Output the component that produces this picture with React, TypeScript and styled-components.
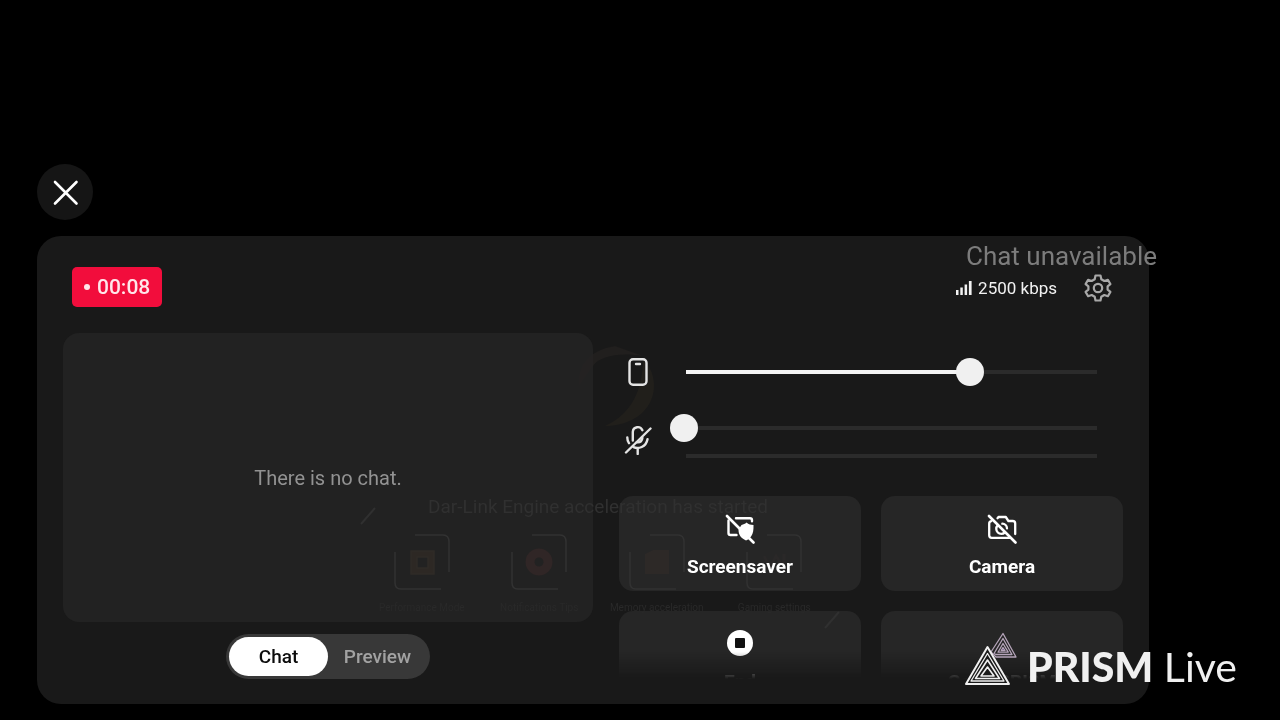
import React, { useState } from "react";
import styled, { createGlobalStyle } from "styled-components";

const GlobalStyle = createGlobalStyle`
  *, *::before, *::after { box-sizing: border-box; }
  body {
    margin: 0;
    background: #000;
    color: #f2f2f2;
    font-family: Roboto, "Liberation Sans", sans-serif;
  }
  button, input { font-family: inherit; }
`;

const Page = styled.main`
  padding: 164px 131px 16px 37px;
  overflow: hidden;
`;

const CloseButton = styled.button`
  display: flex;
  align-items: center;
  justify-content: center;
  width: 56px;
  height: 56px;
  margin-bottom: 16px;
  padding: 0;
  border: 0;
  border-radius: 50%;
  background: #151515;
  color: #fff;
`;

const Panel = styled.section`
  position: relative;
  padding: 31px 26px 25px;
  border-radius: 24px;
  background: #191919;
`;

const Header = styled.header`
  display: flex;
  align-items: center;
  justify-content: space-between;
  margin-bottom: 26px;
  padding: 0 11px 0 9px;
`;

const LiveBadge = styled.div`
  display: flex;
  align-items: center;
  gap: 7px;
  height: 40px;
  padding: 0 12px;
  border-radius: 5px;
  background: #f20d3c;
  color: #ffe6ea;
  font-size: 21px;
  line-height: 24px;
  font-weight: 500;
`;

const Dot = styled.span`
  width: 6px;
  height: 6px;
  border-radius: 50%;
  background: currentColor;
`;

const Status = styled.div`
  display: flex;
  align-items: center;
  gap: 27px;
  padding-top: 2px;
`;

const Bitrate = styled.span`
  display: flex;
  align-items: center;
  gap: 6px;
  font-size: 17px;
  line-height: 24px;
`;

const IconButton = styled.button`
  display: flex;
  padding: 0;
  border: 0;
  background: none;
  color: #a8a8a8;
`;

const Columns = styled.div`
  display: grid;
  grid-template-columns: minmax(0, 530fr) minmax(0, 504fr);
  gap: 26px;
`;

const ChatColumn = styled.div`
  display: flex;
  flex-direction: column;
  align-items: center;
  gap: 12px;
`;

const ChatBox = styled.div`
  display: flex;
  align-items: center;
  justify-content: center;
  width: 100%;
  height: 289px;
  border-radius: 16px;
  background: #222;
  color: #929292;
  font-size: 20px;
  line-height: 24px;
`;

const Toggle = styled.div`
  display: flex;
  width: 204px;
  height: 45px;
  padding: 3px;
  border-radius: 23px;
  background: #383838;
`;

const ToggleOption = styled.button<{ $active: boolean }>`
  flex: 1;
  padding: 0;
  border: 0;
  border-radius: 20px;
  background: ${(p) => (p.$active ? "#fff" : "transparent")};
  color: ${(p) => (p.$active ? "#0c0c0c" : "#a2a2a2")};
  font-size: 19px;
  line-height: 24px;
  font-weight: 500;
`;

const Controls = styled.div`
  padding-top: 25px;
`;

const SliderRow = styled.div`
  display: grid;
  grid-template-columns: 37px minmax(0, 1fr);
  align-items: center;
  gap: 14px;
  padding-right: 10px;
`;

const SliderIcon = styled.label`
  display: flex;
  justify-content: center;
  color: #e4e4e4;
`;

const Mixers = styled.div`
  display: grid;
  gap: 28px;
  margin-bottom: 30px;
`;

const MicTracks = styled.div`
  display: grid;
  gap: 12px;
  padding-bottom: 8px;
`;

const Range = styled.input<{ $value: number }>`
  display: block;
  width: 100%;
  height: 28px;
  margin: 0;
  appearance: none;
  background:
    linear-gradient(#f4f4f4, #f4f4f4) 16px center / calc((100% - 32px) * ${(p) => p.$value / 100}) 4px no-repeat,
    linear-gradient(#2b2b2b, #2b2b2b) 16px center / calc(100% - 32px) 4px no-repeat;

  &::-webkit-slider-thumb {
    width: 28px;
    height: 28px;
    appearance: none;
    border: 0;
    border-radius: 50%;
    background: #f0f0f0;
  }
`;

const LevelBar = styled.div`
  height: 4px;
  margin: 0 16px;
  background: #2b2b2b;
`;

const ActionGrid = styled.div`
  display: grid;
  grid-template-columns: repeat(2, minmax(0, 1fr));
  grid-auto-rows: 95px;
  gap: 20px;
  height: 183px;
  overflow: hidden;
  mask-image: linear-gradient(#000 156px, transparent 183px);
`;

const Action = styled.button`
  display: flex;
  flex-direction: column;
  align-items: center;
  gap: 11px;
  padding: 18px 0 0;
  border: 0;
  border-radius: 14px;
  background: #262626;
  color: #fff;
  font-size: 19px;
  line-height: 24px;
  font-weight: 700;
`;

const Notice = styled.p`
  position: absolute;
  top: 4px;
  right: -8px;
  margin: 0;
  color: #7c7c7c;
  font-size: 26px;
  line-height: 32px;
`;

const Watermark = styled.div`
  position: absolute;
  right: -88px;
  bottom: 18px;
  display: flex;
  align-items: flex-end;
  gap: 10px;
  color: #f0f0f0;
`;

const BrandName = styled.span`
  font-family: Lato, "Open Sans", sans-serif;
  font-size: 41px;
  line-height: 38px;
  font-weight: 400;
  white-space: nowrap;

  strong { font-weight: 900; }
`;

const FadingToast = styled.div`
  position: absolute;
  top: 258px;
  left: 326px;
  width: 470px;
  color: #303030;
  mix-blend-mode: lighten;
  pointer-events: none;
`;

const ToastTitle = styled.p`
  margin: 0 0 14px;
  text-align: center;
  font-size: 19px;
  line-height: 26px;
`;

const ToastTiles = styled.div`
  display: grid;
  grid-template-columns: repeat(4, minmax(0, 1fr));
  justify-items: center;
  font-size: 10px;
  line-height: 12px;
  color: #292929;
`;

const ToastTile = styled.div`
  display: flex;
  flex-direction: column;
  align-items: center;
  gap: 12px;
  white-space: nowrap;
`;

const ToastArt = styled.svg`
  position: absolute;
  top: 100px;
  left: 316px;
  mix-blend-mode: lighten;
  pointer-events: none;
`;

const stroke = {
  fill: "none",
  stroke: "currentColor",
  strokeLinecap: "round" as const,
  strokeLinejoin: "round" as const,
};

const CloseIcon = () => (
  <svg width="28" height="28" viewBox="0 0 28 28" {...stroke} strokeWidth="2.6">
    <path d="M4 4 25.500 25.500M25.500 4 4 25.500" />
  </svg>
);

const SignalIcon = () => (
  <svg width="16" height="14" viewBox="0 0 16 14" fill="currentColor">
    <rect x="0" y="9" width="2.5" height="5" />
    <rect x="4.3" y="6.5" width="2.5" height="7.5" />
    <rect x="8.6" y="3.5" width="2.5" height="10.5" />
    <rect x="12.9" y="0" width="2.7" height="14" />
  </svg>
);

const GearIcon = () => (
  <svg width="28" height="28" viewBox="0 0 28 28" {...stroke} strokeWidth="2.2">
    <path d="M11.5 1.5h5l.8 3.7 3 1.8 3.6-1.2 2.5 4.3-2.8 2.3v3.2l2.8 2.3-2.5 4.3-3.6-1.2-3 1.8-.8 3.7h-5l-.8-3.7-3-1.8-3.6 1.2-2.5-4.3 2.8-2.3v-3.2l-2.8-2.3 2.5-4.3L7.700 7l3-1.8z" />
    <circle cx="14" cy="14" r="4.200" />
  </svg>
);

const PhoneIcon = () => (
  <svg width="20" height="28" viewBox="0 0 20 28" {...stroke} strokeWidth="2.4">
    <rect x="1.500" y="1.300" width="17" height="25.400" rx="3.500" />
    <path d="M8 6h4" />
  </svg>
);

const MicOffIcon = () => (
  <svg width="28" height="30" viewBox="0 0 28 30" {...stroke} strokeWidth="2.4">
    <path d="M8.800 15.500V6.800a5 5 0 0 1 9.600-1.600" />
    <path d="M3.300 12.500c0 2.700.6 4.400 1.700 5.700M9.500 22.200c4.800 2 12.500.2 14-8M13.700 23.500V29" />
    <path d="M12.800 17.300c3 .3 5.200-1.400 5.600-4.500" />
    <path d="M2 27.500 26.500 3.500" />
  </svg>
);

const ScreensaverOffIcon = () => (
  <svg width="30" height="30" viewBox="0 0 30 30" {...stroke} strokeWidth="2.4">
    <path d="M3.500 6.500v12.500a2 2 0 0 0 2 2h6M11 4.300h14a2 2 0 0 1 2 2v1" />
    <path
      d="M21.500 8.500c2.200 1.800 4.300 2.400 7 2.500.1 5-.3 8.500-2.300 11.300L24 25l-3 1.500c-5-2.300-7.500-5.500-7.500-11l3-4.600c2-.3 3.500-1 5-2.400z"
      fill="currentColor"
      stroke="none"
    />
    <path d="M2 2 28.500 28.500" strokeWidth="2.600" />
  </svg>
);

const CameraOffIcon = () => (
  <svg width="30" height="30" viewBox="0 0 30 30" {...stroke} strokeWidth="2.3">
    <path d="M10.500 4.200 11.500 3h7.300l2.600 4h4.300a2.500 2.500 0 0 1 2.500 2.500V20" />
    <path d="M4.200 7.200a2.500 2.500 0 0 0-2 2.500v11.600a2.500 2.500 0 0 0 2.500 2.500h18" />
    <path d="M10.700 11.400a5 5 0 0 0 7.200 7M15.300 9.700a5 5 0 0 1 4.700 4.700" />
    <path d="M2 2 28.500 28.500" strokeWidth="2.600" />
  </svg>
);

const StopIcon = () => (
  <svg width="30" height="30" viewBox="0 0 30 30">
    <circle cx="15" cy="14" r="13" fill="#fff" />
    <rect x="10" y="9" width="10" height="10" rx="1" fill="#111" />
  </svg>
);

const PrismLogo = () => (
  <svg width="52" height="54" viewBox="0 0 52 54" fill="none" strokeLinejoin="round">
    <g stroke="#b5a4b9" strokeWidth="1.300">
      <path d="M38 1.500 51 25H31L26 20z" />
      <path d="M38 6.500 47 22.500H31L29 21.500z" />
      <path d="M38 11.500 43.200 20.200H33z" />
      <path d="M38 15.500 40 18.500H36.200z" fill="#4a2d72" />
    </g>
    <g stroke="#f0f0f0">
      <path d="M22.500 15 44 52H1z" strokeWidth="2" fill="#1b1b1b" />
      <path d="M22.500 21.500 39 49H6z" strokeWidth="1.300" />
      <path d="M22.500 28 34.500 46.500H10.500z" strokeWidth="1.600" />
      <path d="M22.500 35 29 44H16z" strokeWidth="1.600" />
    </g>
  </svg>
);

const TileFrame = ({ children }: { children?: React.ReactNode }) => (
  <svg width="56" height="56" viewBox="0 0 56 56" fill="none" stroke="#323232" strokeWidth="1.500">
    <path d="M21 1h28q6 0 6 7v30M1 18v31q0 6 6 6h40" />
    {children}
  </svg>
);

const tiles = [
  {
    label: "Performance Mode",
    art: <path d="M17 17h23v23H17zM23 23h11v11H23z" fill="#2d2824" fillRule="evenodd" stroke="#2f2b27" />,
  },
  {
    label: "Notifications Tips",
    art: <circle cx="28" cy="28" r="9" stroke="#302626" strokeWidth="9" />,
  },
  {
    label: "Memory acceleration",
    art: <path d="M16 20 24 16h16v24H16z" fill="#2d2927" stroke="none" />,
  },
  {
    label: "Gaming settings",
    art: <path d="M18 22l6 12 6-12 8 12V20" stroke="#2a2828" strokeWidth="3" />,
  },
];

const actions = [
  { label: "Screensaver", icon: <ScreensaverOffIcon /> },
  { label: "Camera", icon: <CameraOffIcon /> },
  { label: "End", icon: <StopIcon /> },
  { label: "Go to PRISM", icon: <svg width="30" height="30" /> },
];

export default function App() {
  const [tab, setTab] = useState("Chat");
  const [volume, setVolume] = useState(69);
  const [mic, setMic] = useState(0);

  return (
    <>
      <GlobalStyle />
      <Page>
        <CloseButton aria-label="Close">
          <CloseIcon />
        </CloseButton>
        <Panel>
          <Header>
            <LiveBadge>
              <Dot />
              00:08
            </LiveBadge>
            <Status>
              <Bitrate>
                <SignalIcon />
                2500 kbps
              </Bitrate>
              <IconButton aria-label="Settings">
                <GearIcon />
              </IconButton>
            </Status>
          </Header>

          <Columns>
            <ChatColumn>
              <ChatBox>There is no chat.</ChatBox>
              <Toggle>
                {["Chat", "Preview"].map((name) => (
                  <ToggleOption key={name} $active={tab === name} onClick={() => setTab(name)}>
                    {name}
                  </ToggleOption>
                ))}
              </Toggle>
            </ChatColumn>

            <Controls>
              <Mixers>
                <SliderRow>
                  <SliderIcon htmlFor="device-volume" aria-label="Device volume">
                    <PhoneIcon />
                  </SliderIcon>
                  <Range
                    id="device-volume"
                    type="range"
                    $value={volume}
                    value={volume}
                    onChange={(e) => setVolume(Number(e.target.value))}
                  />
                </SliderRow>
                <SliderRow>
                  <SliderIcon htmlFor="mic-volume" aria-label="Microphone volume">
                    <MicOffIcon />
                  </SliderIcon>
                  <MicTracks>
                    <Range
                      id="mic-volume"
                      type="range"
                      $value={mic}
                      value={mic}
                      onChange={(e) => setMic(Number(e.target.value))}
                    />
                    <LevelBar />
                  </MicTracks>
                </SliderRow>
              </Mixers>
              <ActionGrid>
                {actions.map((action) => (
                  <Action key={action.label}>
                    {action.icon}
                    {action.label}
                  </Action>
                ))}
              </ActionGrid>
            </Controls>
          </Columns>

          <FadingToast aria-hidden="true">
            <ToastTitle>Dar-Link Engine acceleration has started</ToastTitle>
            <ToastTiles>
              {tiles.map((tile) => (
                <ToastTile key={tile.label}>
                  <TileFrame>{tile.art}</TileFrame>
                  {tile.label}
                </ToastTile>
              ))}
            </ToastTiles>
          </FadingToast>
          <ToastArt width="500" height="300" viewBox="0 0 500 300" fill="none" aria-hidden="true">
            <path d="M226 50C224 30 236 14 262 10l28 10c-22-4-44 0-50 10z" fill="#262321" opacity=".6" />
            <path d="M290 22c16 18 14 42-2 56-10 8-22 12-36 12 22-10 38-30 38-68z" fill="#25221d" opacity=".7" />
            <path d="M8 188 22 172M472 292 486 276" stroke="#303030" strokeWidth="2" />
          </ToastArt>

          <Notice>Chat unavailable</Notice>
          <Watermark>
            <PrismLogo />
            <BrandName>
              <strong>PRISM</strong> Live
            </BrandName>
          </Watermark>
        </Panel>
      </Page>
    </>
  );
}
